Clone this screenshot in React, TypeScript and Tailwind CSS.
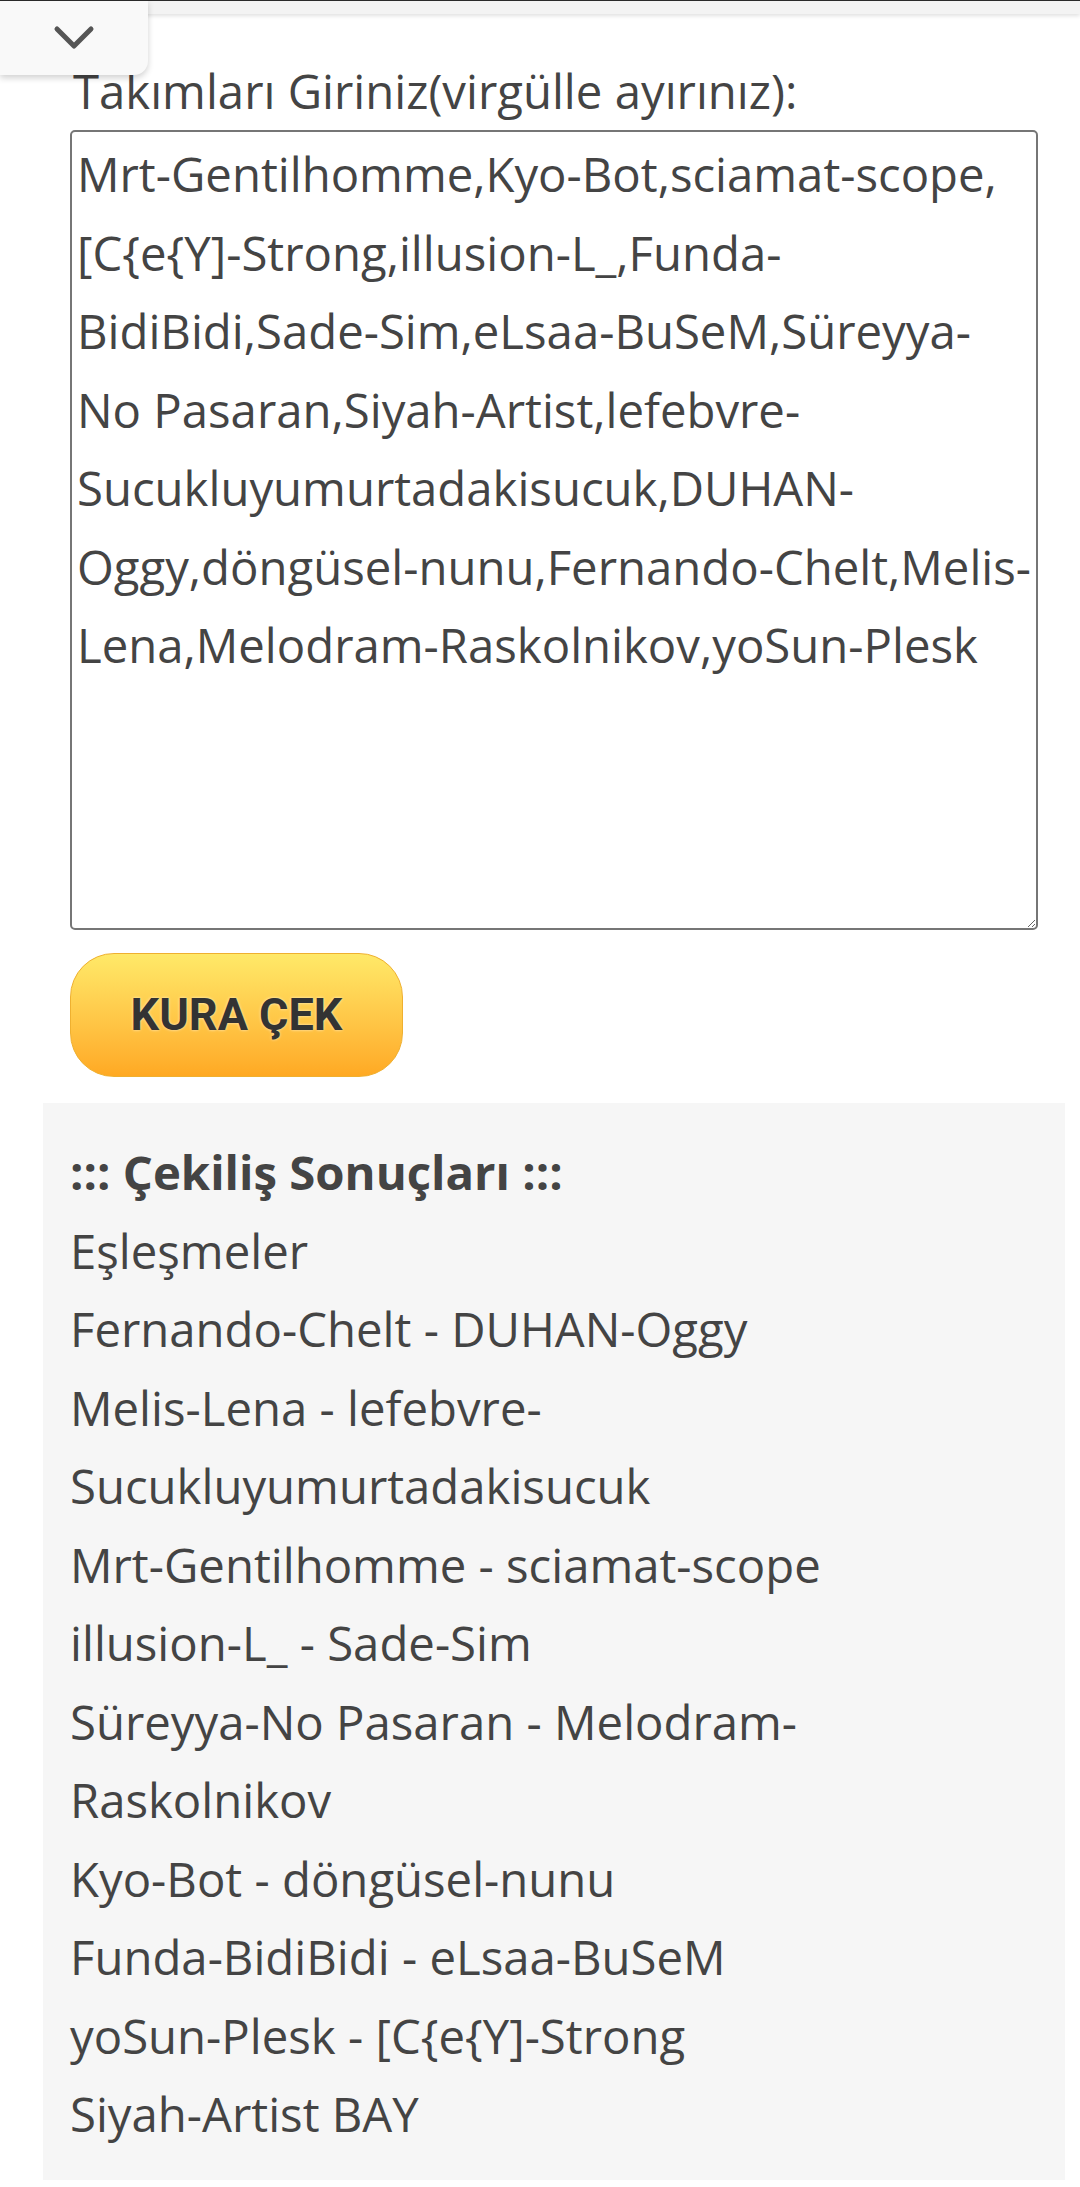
import { useState } from "react";

const initialTeams =
  "Mrt-Gentilhomme,Kyo-Bot,sciamat-scope,[C{e{Y]-Strong,illusion-L_,Funda-BidiBidi,Sade-Sim,eLsaa-BuSeM,Süreyya-No Pasaran,Siyah-Artist,lefebvre-Sucukluyumurtadakisucuk,DUHAN-Oggy,döngüsel-nunu,Fernando-Chelt,Melis-Lena,Melodram-Raskolnikov,yoSun-Plesk";

const pairs = [
  "Fernando-Chelt - DUHAN-Oggy",
  "Melis-Lena - lefebvre-Sucukluyumurtadakisucuk",
  "Mrt-Gentilhomme - sciamat-scope",
  "illusion-L_ - Sade-Sim",
  "Süreyya-No Pasaran - Melodram-Raskolnikov",
  "Kyo-Bot - döngüsel-nunu",
  "Funda-BidiBidi - eLsaa-BuSeM",
  "yoSun-Plesk - [C{e{Y]-Strong",
  "Siyah-Artist BAY",
];

function TopTab() {
  return (
    <>
      <div className="absolute left-0 right-0 top-0 h-[14px] border-t border-[#2a2a2a] bg-[#f3f3f3] shadow-[0_2px_4px_rgba(0,0,0,0.12)]" />
      <button
        type="button"
        aria-label="Menüyü aç"
        className="absolute left-0 top-0 flex h-[75px] w-[148px] items-center justify-center rounded-br-[14px] border-t border-[#2a2a2a] bg-[#f9f9f9] shadow-[0_3px_6px_rgba(0,0,0,0.18)]"
      >
        <svg width="42" height="28" viewBox="0 0 42 28" fill="none" aria-hidden="true">
          <path
            d="M4 5 L21 22 L38 5"
            stroke="#555"
            strokeWidth="5"
            strokeLinecap="round"
            strokeLinejoin="round"
          />
        </svg>
      </button>
    </>
  );
}

export default function App() {
  const [teams, setTeams] = useState(initialTeams);

  return (
    <div className="relative min-h-[2187px] w-[1080px] bg-white font-['Open_Sans',sans-serif] text-[#444]">
      <TopTab />

      <div className="pl-[70px] pr-[42px] pt-[52px]">
        <label htmlFor="teams" className="block pl-[3px] text-[47.3px] leading-[78px]">
          Takımları Giriniz(virgülle ayırınız):
        </label>
        <textarea
          id="teams"
          value={teams}
          onChange={(e) => setTeams(e.target.value)}
          className="block h-[800px] w-[968px] rounded-[5px] border-2 border-[#767676] bg-white pb-[2px] pl-[5px] pr-[3px] pt-[3px] font-['Open_Sans',sans-serif] text-[47.3px] leading-[78.5px] text-[#444] outline-none"
        />
        <button
          type="button"
          className="mt-[23px] flex h-[124px] w-[333px] items-center justify-center rounded-[44px] border border-[#efb030] bg-linear-to-b from-[#ffe968] to-[#ffa922] font-['Roboto',sans-serif] text-[45px] font-bold text-[#333] [text-shadow:0_0_3px_rgba(255,255,255,0.7)]"
        >
          KURA ÇEK
        </button>
      </div>

      <div className="ml-[43px] mr-[15px] mt-[26px] bg-[#f6f6f6] pb-[26px] pl-[27px] pr-[29px] pt-[30px] text-[47.3px] leading-[78.5px]">
        <div className="font-bold">::: Çekiliş Sonuçları :::</div>
        <div>Eşleşmeler</div>
        {pairs.map((pair) => (
          <div key={pair}>{pair}</div>
        ))}
      </div>
    </div>
  );
}
